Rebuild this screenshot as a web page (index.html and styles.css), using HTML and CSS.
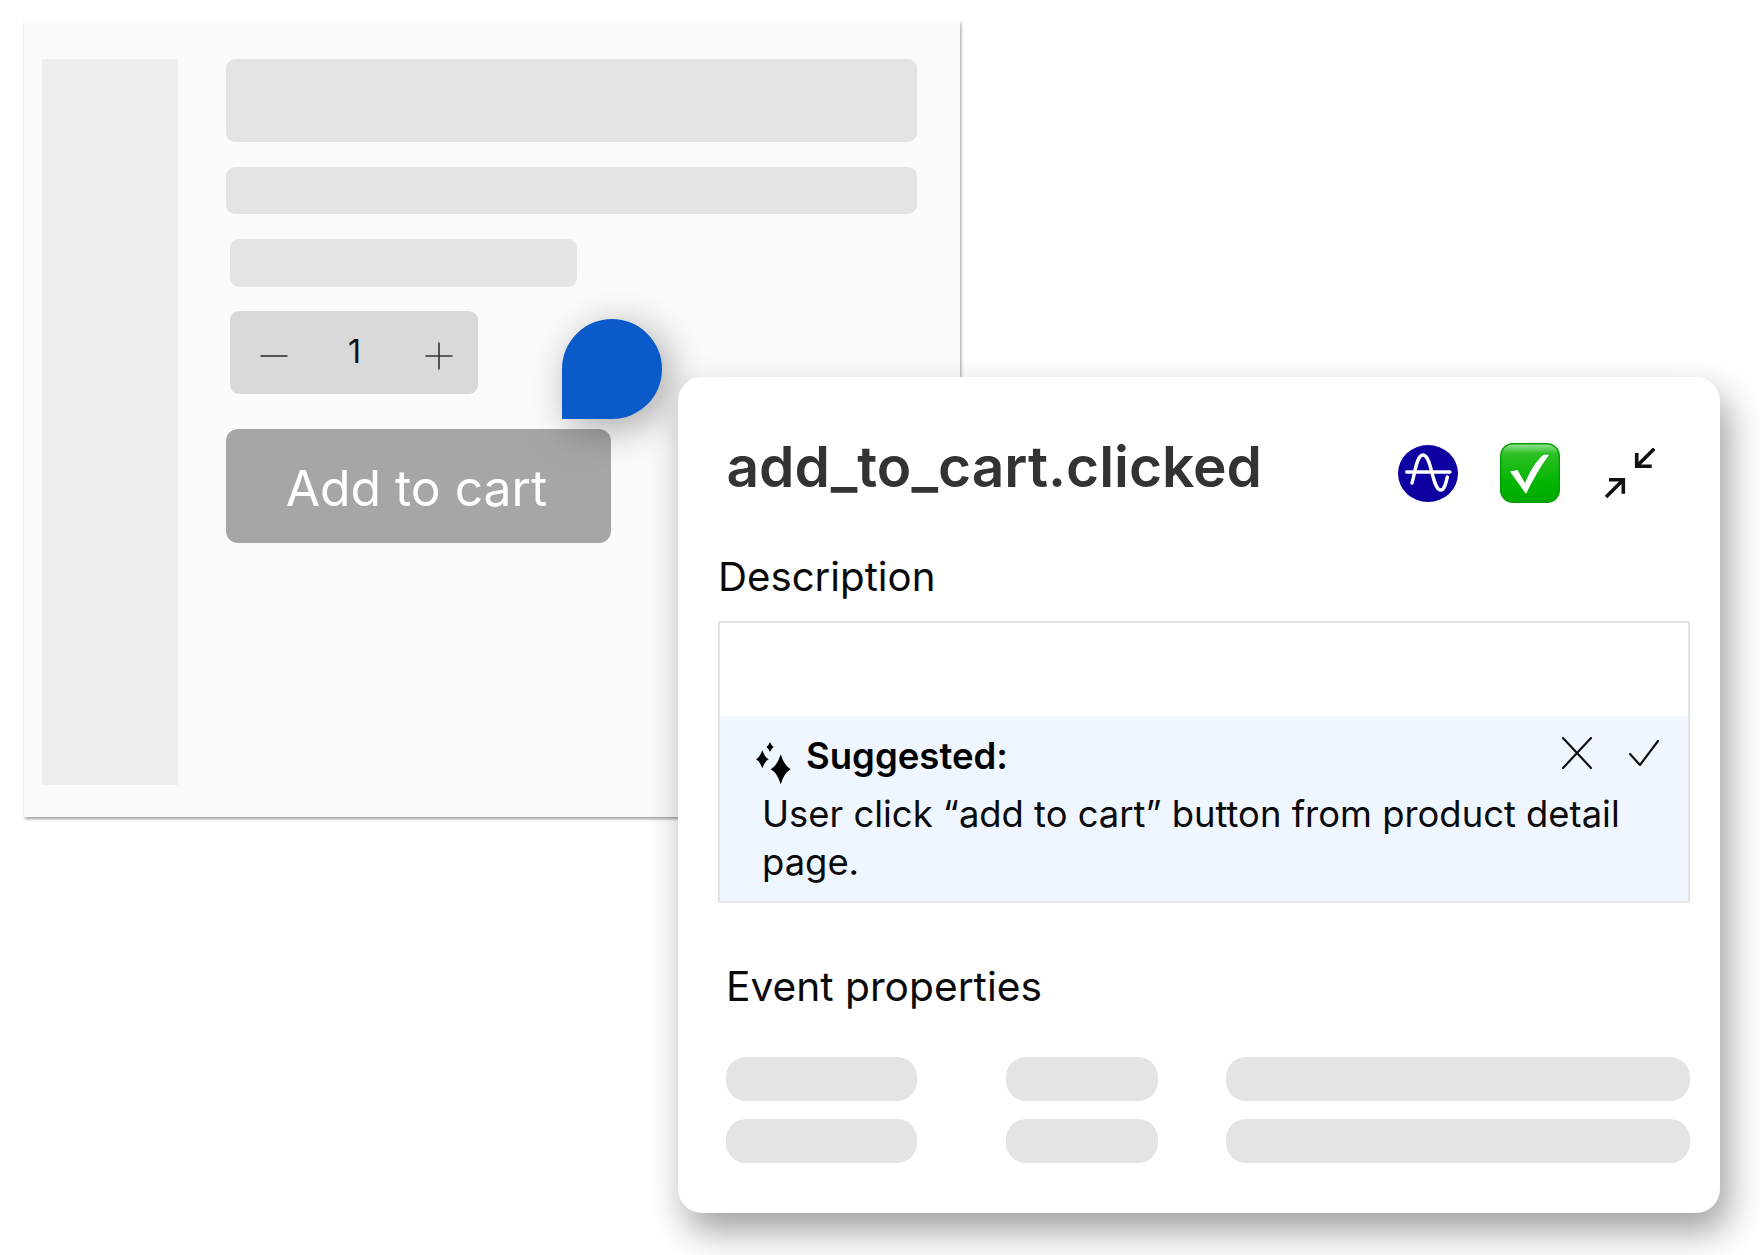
FILE: index.html
```html
<!DOCTYPE html>
<html lang="en">
<head>
<meta charset="utf-8">
<title>add_to_cart.clicked</title>
<link rel="stylesheet" href="styles.css">
</head>
<body>
<div class="stage">
  <section class="shop">
    <aside class="shop-side"></aside>
    <div class="shop-main">
      <div class="block block-title"></div>
      <div class="block block-sub"></div>
      <div class="block block-price"></div>
      <div class="stepper">
        <svg class="step-icon" viewBox="0 0 28 28"><path d="M0.5 14H27.5"/></svg>
        <span class="step-value">1</span>
        <svg class="step-icon" viewBox="0 0 28 28"><path d="M0.5 14H27.5M14 0.5V27.5"/></svg>
      </div>
      <div class="add-button">Add to cart</div>
    </div>
    <div class="pin"></div>
  </section>

  <section class="event-card">
    <header class="event-head">
      <h1 class="event-title">add_to_cart.clicked</h1>
      <div class="event-actions">
        <svg class="logo" viewBox="0 0 60 57">
          <ellipse cx="30" cy="28.5" rx="30" ry="28.5" fill="#0e00a0"/>
          <path d="M8.7 27H52M14 38C17 28 18.500 10 25 10C34 10 34 45 42.700 45C46.500 45 48 38 49.300 32" fill="none" stroke="#fff" stroke-width="3.4" stroke-linecap="round"/>
        </svg>
        <svg class="check-emoji" viewBox="0 0 60 60">
          <defs>
            <linearGradient id="emojiBg" x1="0" y1="0" x2="0" y2="1">
              <stop offset="0" stop-color="#8fe08f"/>
              <stop offset="0.16" stop-color="#2cc024"/>
              <stop offset="0.7" stop-color="#00b400"/>
              <stop offset="1" stop-color="#00aa00"/>
            </linearGradient>
          </defs>
          <rect width="60" height="60" rx="13" fill="#05a005"/>
          <rect x="1.500" y="1.500" width="57" height="57" rx="11.500" fill="url(#emojiBg)"/>
          <path d="M10 28.500L17.500 27L25 40C30 28 36 18 43.500 11.700L49 11.700C40 24 32 38 26 51Z" fill="#fff"/>
        </svg>
        <svg class="compress" viewBox="0 0 50 50" fill="none" stroke="#111" stroke-width="3.6">
          <path d="M49.300 0.700L31.700 18.300M31.700 5V18.300H46.700"/>
          <path d="M1 49L18.300 31.700M4 31.700H18.300V45.700"/>
        </svg>
      </div>
    </header>

    <h2 class="label label-desc">Description</h2>
    <div class="desc-box">
      <div class="desc-blank"></div>
      <div class="suggest">
        <div class="suggest-head">
          <svg class="sparkles" viewBox="0 0 36 44">
            <path d="M24.700 12.300Q28.200 23.800 34.700 27.300Q28.200 30.800 24.700 42.300Q21.200 30.800 14.700 27.300Q21.200 23.800 24.700 12.300Z"/>
            <path d="M6.300 8Q8.500 15.100 12.600 17.300Q8.500 19.500 6.300 26.600Q4.100 19.500 0 17.300Q4.100 15.100 6.300 8Z"/>
            <path d="M14 0Q15.300 3.700 17.700 5Q15.300 6.300 14 10Q12.700 6.300 10.300 5Q12.700 3.700 14 0Z"/>
          </svg>
          <strong class="suggest-title">Suggested:</strong>
          <div class="suggest-actions">
            <svg class="suggest-x" viewBox="0 0 30 32"><path d="M1 1L29 31M29 1L1 31"/></svg>
            <svg class="suggest-ok" viewBox="0 0 30 26"><path d="M1 14L11 25L29 1"/></svg>
          </div>
        </div>
        <p class="suggest-text">User click “add to cart” button from product detail page.</p>
      </div>
    </div>

    <h2 class="label label-props">Event properties</h2>
    <div class="prop-grid">
      <span class="pill pill-name"></span><span class="pill pill-type"></span><span class="pill"></span>
      <span class="pill pill-name"></span><span class="pill pill-type"></span><span class="pill"></span>
    </div>
  </section>
</div>
</body>
</html>
```

FILE: styles.css
```css
* { box-sizing: border-box; }

html, body { margin: 0; background: #fff; }

body {
  font-family: Inter, "Liberation Sans", sans-serif;
  color: #000;
}

.stage {
  position: relative;
  width: 1760px;
  height: 1255px;
  overflow: hidden;
  padding: 21px 0 0 24px;
}

.shop {
  position: relative;
  display: flex;
  gap: 48px;
  width: 936px;
  height: 796px;
  padding: 37.5px 43px 32px 18px;
  background: #fbfbfb;
  box-shadow: 1px 2px 3px rgba(0, 0, 0, 0.38);
}

.shop-side { width: 136px; flex: none; background: #eee; }

.shop-main { flex: 1; display: flex; flex-direction: column; align-items: flex-start; }

.block { background: #e4e4e4; border-radius: 9px; }
.block-title { width: 691px; height: 83.5px; }
.block-sub { width: 691px; height: 47.5px; margin-top: 24.5px; }
.block-price { width: 347px; height: 47.5px; margin: 25px 0 0 4px; }

.stepper {
  display: flex;
  align-items: center;
  justify-content: space-between;
  width: 248px;
  height: 83px;
  margin: 24.5px 0 0 4px;
  padding: 0 25px 0 30px;
  background: #d9d9d9;
  border-radius: 9px;
}

.step-icon { width: 28px; height: 28px; margin-top: 6px; fill: none; stroke: #333; stroke-width: 1.6; }
.step-value { font-size: 32px; line-height: 40px; margin: -2px 4px 0 0; color: #111; }

.add-button {
  display: flex;
  align-items: center;
  justify-content: center;
  width: 385px;
  height: 113.5px;
  margin-top: 35px;
  padding: 4px 4px 0 0;
  background: #a6a6a6;
  border-radius: 12px;
  color: #fff;
  font-size: 49.8px;
}

.pin {
  position: absolute;
  left: 538px;
  top: 298px;
  width: 100px;
  height: 100px;
  background: #0b5ac9;
  border-radius: 50% 50% 50% 0;
  box-shadow: 8px 8px 40px rgba(0, 0, 0, 0.35);
}

.event-card {
  position: absolute;
  left: 678px;
  top: 377px;
  width: 1042px;
  height: 836px;
  padding-top: 66px;
  background: #fff;
  border-radius: 24px;
  box-shadow: 8px 18px 36px rgba(0, 0, 0, 0.38);
}

.event-head {
  display: flex;
  align-items: center;
  justify-content: space-between;
  height: 60px;
  padding: 0 65px 0 48.5px;
}

.event-title {
  margin: -12px 0 0;
  font-size: 56.8px;
  line-height: 60px;
  font-weight: 600;
  color: #333;
}

.event-actions { display: flex; align-items: center; gap: 42px; }
.logo { width: 60px; height: 57px; }
.check-emoji { width: 60px; height: 60px; }
.compress { width: 50px; height: 50px; margin-left: 3px; }

.label { margin: 0; line-height: 48px; font-weight: 400; color: #0a0a0a; }
.label-desc { margin: 50px 0 0 40px; font-size: 40.2px; }
.label-props { margin: 60px 0 0 48px; font-size: 40.7px; }

.desc-box {
  width: 972px;
  height: 282px;
  margin: 20px 0 0 40px;
  border: 2px solid #e4e4e4;
  display: flex;
  flex-direction: column;
}

.desc-blank { height: 94px; }

.suggest { flex: 1; padding: 19px 29px 0 36px; background: #f0f6ff; }

.suggest-head { display: flex; align-items: flex-start; }
.sparkles { width: 36px; height: 44px; margin-top: 6px; fill: #000; }
.suggest-title { margin-left: 14px; font-size: 36.5px; line-height: 40px; font-weight: 600; }
.suggest-actions { margin: 1px 0 0 auto; display: flex; align-items: flex-start; gap: 37px; }
.suggest-x { width: 30px; height: 32px; fill: none; stroke: #111; stroke-width: 2.2; stroke-linecap: round; }
.suggest-ok { width: 30px; height: 26px; margin-top: 3px; fill: none; stroke: #111; stroke-width: 2.2; stroke-linecap: round; }

.suggest-text { margin: 3.5px 20px 0 6px; font-size: 36.4px; line-height: 48px; color: #0a0a0a; }

.prop-grid {
  display: grid;
  grid-template-columns: 280px 220px 464px;
  grid-auto-rows: 44px;
  row-gap: 18px;
  margin: 46px 0 0 48px;
}

.pill { background: #e4e4e4; border-radius: 20px; }
.pill-name { width: 191px; }
.pill-type { width: 152px; }
```
